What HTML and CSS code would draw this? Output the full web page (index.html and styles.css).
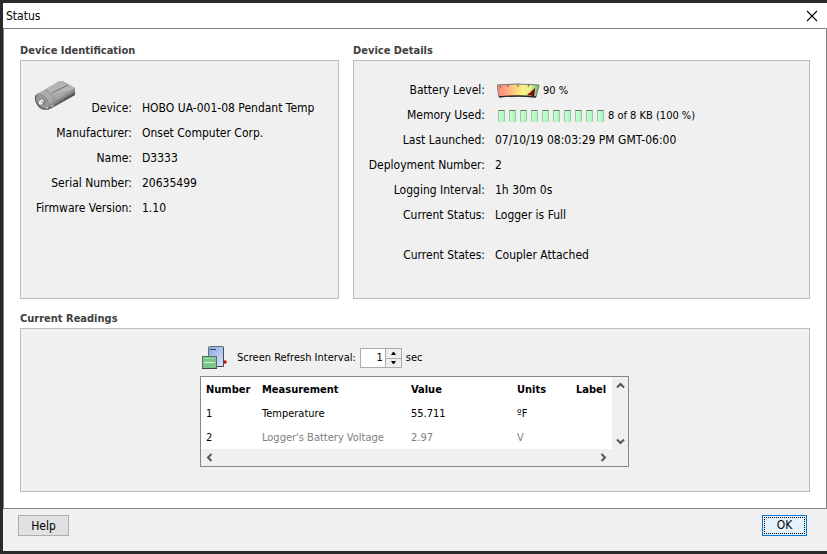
FILE: index.html
```html
<!DOCTYPE html>
<html lang="en">
<head>
<meta charset="utf-8">
<title>Status</title>
<link rel="stylesheet" href="styles.css">
</head>
<body>
<div class="window">
  <header class="titlebar">
    <h1>Status</h1>
    <button class="close" type="button" aria-label="Close">
      <svg width="12" height="12" viewBox="0 0 12 12"><path d="M1 1 11 11M11 1 1 11" stroke="#000" stroke-width="1.1" fill="none"/></svg>
    </button>
  </header>
  <main class="content">
    <div class="columns">
      <section class="group">
        <h2>Device Identification</h2>
        <div class="panel">
          <dl class="fields identification">
            <dt class="with-icon">
              <svg width="42" height="32" viewBox="0 0 42 32" aria-hidden="true">
                <defs>
                  <linearGradient id="body" gradientUnits="userSpaceOnUse" x1="18" y1="6" x2="28" y2="22"><stop offset="0" stop-color="#b0b0b0"/><stop offset=".6" stop-color="#a6a6a6"/><stop offset=".8" stop-color="#808080"/><stop offset="1" stop-color="#2a2a2a"/></linearGradient>
                </defs>
                <path d="M2 13 26 -1 40 7V14L17 27Q9 31 3 25Q-1 19 2 13Z" fill="url(#body)"/>
                <path d="M26 -1 40 7 34 10 18 13 10 9Z" fill="#b4b4b4"/>
                <path d="M17 12 33 4" stroke="#6f6f6f" fill="none"/>
                <path d="M10 9Q17 12 19 18 20 22 18 26" stroke="#8c8c8c" fill="none"/>
                <path d="M2 13Q8 12 12 18 15 23 13 28 6 30 3 25-1 19 2 13Z" fill="#999" stroke="#858585" stroke-width=".7"/>
                <path d="M1 14Q-1 20 4 25Q8 29 14 28" stroke="#505050" fill="none"/>
                <circle cx="7" cy="21" r="3.200" fill="#777"/>
                <path d="M4 20 7 18 9 20 7 24 4 23Z" fill="#f0f0f0"/>
                <path d="M6 21H8" stroke="#888" fill="none"/>
                <path d="M16 25H18M11 27H13" stroke="#ddd" fill="none"/>
              </svg>
              <span>Device:</span>
            </dt>
            <dd class="low">HOBO UA-001-08 Pendant Temp</dd>
            <dt>Manufacturer:</dt><dd>Onset Computer Corp.</dd>
            <dt>Name:</dt><dd>D3333</dd>
            <dt>Serial Number:</dt><dd>20635499</dd>
            <dt>Firmware Version:</dt><dd>1.10</dd>
          </dl>
        </div>
      </section>
      <section class="group">
        <h2>Device Details</h2>
        <div class="panel">
          <dl class="fields details">
            <dt>Battery Level:</dt>
            <dd class="meter">
              <svg width="43" height="16" viewBox="0 0 43 16" aria-hidden="true">
                <defs>
                  <linearGradient id="gauge"><stop offset="0" stop-color="#ff8278"/><stop offset=".35" stop-color="#ffc080"/><stop offset=".6" stop-color="#f6f27e"/><stop offset=".8" stop-color="#e6f28a"/><stop offset="1" stop-color="#6fb270"/></linearGradient>
                </defs>
                <path d="M0 2Q21 0 42 2L39 14Q21 12 2 14Z" fill="url(#gauge)"/>
                <path d="M2 14 0 2Q21 0 42 2L39 14" fill="none" stroke="#777"/>
                <path d="M2 14Q21 12 39 14" fill="none" stroke="#222" stroke-width="1.4"/>
                <path d="M3 2 4 5M11 1V4M21 1V4M32 1 31 4" stroke="#665" fill="none"/>
                <path d="M38 5 37 13 30 12Z" fill="#8d1010"/>
                <path d="M38 5 35 13 37 13Z" fill="#222"/>
              </svg>
              <span>90 %</span>
            </dd>
            <dt>Memory Used:</dt>
            <dd class="meter">
              <span class="blocks" aria-hidden="true"><i></i><i></i><i></i><i></i><i></i><i></i><i></i><i></i><i></i><i></i></span>
              <span>8 of 8 KB (100 %)</span>
            </dd>
            <dt>Last Launched:</dt><dd>07/10/19 08:03:29 PM GMT-06:00</dd>
            <dt>Deployment Number:</dt><dd>2</dd>
            <dt>Logging Interval:</dt><dd>1h 30m 0s</dd>
            <dt>Current Status:</dt><dd>Logger is Full</dd>
            <dt class="apart">Current States:</dt><dd class="apart">Coupler Attached</dd>
          </dl>
        </div>
      </section>
    </div>
    <section class="group">
      <h2>Current Readings</h2>
      <div class="panel">
        <div class="readings">
          <div class="refresh">
            <svg width="27" height="26" viewBox="0 0 27 26" aria-hidden="true">
              <defs>
                <linearGradient id="blue" x1="0" y1="0" x2="1" y2="1"><stop offset="0" stop-color="#86a8e2"/><stop offset="1" stop-color="#d6e4ff"/></linearGradient>
              </defs>
              <circle cx="25" cy="17" r="1.8" fill="#c41000"/>
              <rect x="8.500" y="1.500" width="15" height="20" rx="1" fill="url(#blue)" stroke="#666c78"/>
              <path d="M17 21.500H23.500V2" fill="none" stroke="#4a4a4a"/>
              <path d="M10 4.500H16" stroke="#33425f"/>
              <rect x="2.500" y="11.500" width="14" height="12" fill="#7cc58c" stroke="#5f6c62"/>
              <path d="M4 17.500H15" stroke="#d4f7c8"/>
              <path d="M4 13.500H15" stroke="#9edbaa"/>
              <path d="M2 23.500H17" stroke="#3e4a40"/>
            </svg>
            <label for="interval">Screen Refresh Interval:</label>
            <span class="spinner">
              <input id="interval" type="number" value="1" min="1">
              <span class="steps">
                <button type="button" aria-label="Increase"><svg width="7" height="4" viewBox="0 0 7 4"><path d="M1 4 3 1H4L6 4Z"/></svg></button>
                <button type="button" aria-label="Decrease"><svg width="7" height="4" viewBox="0 0 7 4"><path d="M1 0 3 3H4L6 0Z"/></svg></button>
              </span>
            </span>
            <span>sec</span>
          </div>
          <div class="listing">
            <table>
              <colgroup><col class="c-number"><col class="c-name"><col class="c-value"><col class="c-units"><col></colgroup>
              <thead><tr><th>Number</th><th>Measurement</th><th>Value</th><th>Units</th><th>Label</th></tr></thead>
              <tbody>
                <tr><td>1</td><td>Temperature</td><td>55.711</td><td>ºF</td><td></td></tr>
                <tr class="derived"><td>2</td><td>Logger's Battery Voltage</td><td>2.97</td><td>V</td><td></td></tr>
              </tbody>
            </table>
            <div class="bar vertical">
              <button type="button" aria-label="Scroll up"><svg width="9" height="7" viewBox="0 0 9 7"><path d="M1 5.500 4.500 2 8 5.500"/></svg></button>
              <button type="button" aria-label="Scroll down"><svg width="9" height="7" viewBox="0 0 9 7"><path d="M1 1.500 4.500 5 8 1.500"/></svg></button>
            </div>
            <div class="bar horizontal">
              <button type="button" aria-label="Scroll left"><svg width="7" height="9" viewBox="0 0 7 9"><path d="M5.500 1 2 4.500 5.500 8"/></svg></button>
              <button type="button" aria-label="Scroll right"><svg width="7" height="9" viewBox="0 0 7 9"><path d="M1.500 1 5 4.500 1.500 8"/></svg></button>
            </div>
          </div>
        </div>
      </div>
    </section>
  </main>
  <footer class="actions">
    <button class="push help" type="button">Help</button>
    <button class="push ok" type="button"><span>OK</span></button>
  </footer>
</div>
</body>
</html>
```
FILE: styles.css
```css
* { box-sizing: border-box; }

body {
  margin: 0;
  background: #f0f0f0;
  color: #000;
  font-family: Tahoma, "DejaVu Sans Condensed", "DejaVu Sans", sans-serif;
  font-size: 12px;
  line-height: 16px;
}

button, input { font: inherit; color: inherit; margin: 0; padding: 0; }
svg { display: block; flex: none; }

.window {
  display: flex;
  flex-direction: column;
  min-height: 100vh;
  border: 3px solid #2b2a2a;
  border-right: 0;
  background: #f0f0f0;
}

.titlebar {
  display: flex;
  justify-content: space-between;
  align-items: center;
  height: 25px;
  padding: 0 9px 0 3px;
  background: #fff;
}
.titlebar h1 { margin: 0; font-size: 12px; font-weight: normal; }
.close { border: 0; background: none; }

.content {
  flex: 1;
  display: flex;
  flex-direction: column;
  gap: 12px;
  padding: 14px 16px 16px;
  border: 1px solid #828282;
  background: #fff;
}
.columns {
  display: grid;
  grid-template-columns: 319fr 457fr;
  gap: 14px;
}
.group { display: flex; flex-direction: column; }
.group h2 {
  margin: 0 0 1px;
  font-size: 11px;
  line-height: 16px;
  color: #404040;
}
.panel {
  flex: 1;
  border: 1px solid #bcbcbc;
  background: #f0f0f0;
}
.columns .panel { min-height: 239px; }

.fields {
  display: grid;
  align-content: start;
  column-gap: 10px;
  margin: 0;
  padding: 0 14px;
  line-height: 25px;
  white-space: nowrap;
}
.fields dt { text-align: right; }
.fields dd { margin: 0; }
.identification { grid-template-columns: 97px 1fr; padding-top: 20px; }
.details { grid-template-columns: 117px 1fr; padding-top: 17px; }
.with-icon { display: flex; justify-content: space-between; height: 40px; }
.with-icon span, .low { align-self: end; }
.fields .apart { margin-top: 15px; }

.meter {
  display: flex;
  align-items: center;
  gap: 3px;
  padding-left: 2px;
  font-size: 11px;
}
.blocks { display: flex; gap: 4px; padding: 0 1px; }
.blocks i {
  width: 7px;
  height: 12px;
  border: 1px solid #9cc4a6;
  border-top-color: #5f7a66;
  border-bottom-color: #b5ecc2;
  border-radius: 1px;
  background: linear-gradient(100deg, #ccffd8, #a6f7b8);
}

.readings {
  width: 430px;
  margin: 0 auto;
  padding: 16px 1px 24px 0;
  font-size: 11px;
}
.refresh {
  display: flex;
  align-items: center;
  gap: 4px;
  height: 26px;
  margin-bottom: 5px;
}
.refresh label { margin-left: 6px; }
.spinner {
  display: flex;
  width: 42px;
  height: 20px;
  border: 1px solid #abadb3;
  background: #fff;
}
.spinner input {
  flex: 1;
  min-width: 0;
  padding-right: 2px;
  border: 0;
  outline: 0;
  background: none;
  text-align: right;
  appearance: textfield;
}
.spinner input::-webkit-inner-spin-button { appearance: none; margin: 0; }
.steps { display: flex; flex-direction: column; width: 16px; }
.steps button {
  flex: 1;
  display: flex;
  align-items: center;
  justify-content: center;
  border: 1px solid #acacac;
  border-width: 0 0 0 1px;
  background: #eee;
}
.steps button + button { border-top-width: 1px; }

.listing {
  display: grid;
  grid-template-columns: 1fr 16px;
  border: 1px solid #828790;
  background: #fff;
}
table { table-layout: fixed; width: 100%; border-collapse: collapse; }
th, td {
  height: 24px;
  padding: 2px 0 0;
  text-align: left;
  white-space: nowrap;
}
th:first-child, td:first-child { padding-left: 5px; }
.c-number { width: 61px; }
.c-name { width: 149px; }
.c-value { width: 106px; }
.c-units { width: 59px; }
.derived td { color: #808080; }
.derived td:first-child { color: #000; }

.bar { display: flex; justify-content: space-between; background: #f0f0f0; }
.bar button { display: grid; place-items: center; width: 16px; height: 16px; border: 0; background: none; }
.bar path { fill: none; stroke: #555; stroke-width: 2; }
.vertical { flex-direction: column; }
.horizontal { grid-column: 1 / -1; padding-right: 17px; height: 17px; }

.actions {
  display: flex;
  justify-content: space-between;
  padding: 6px 20px 15px 15px;
}
.push { height: 21px; border: 1px solid #adadad; background: #e1e1e1; }
.help { width: 51px; }
.ok { width: 45px; border-color: #0078d7; background: #e5f1fb; padding: 1px; }
.ok span {
  display: block;
  border: 1px dotted #000;
  line-height: 15px;
}
```
